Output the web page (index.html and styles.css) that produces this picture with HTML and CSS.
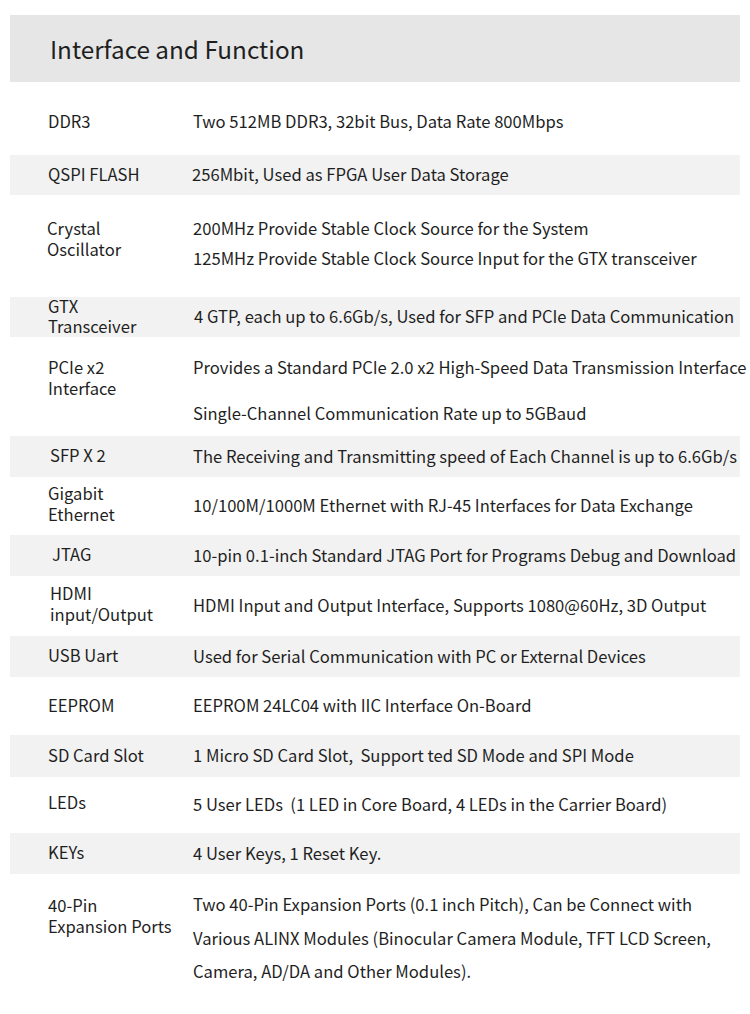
FILE: index.html
```html
<!DOCTYPE html>
<html>
<head>
<meta charset="utf-8">
<link rel="stylesheet" href="styles.css">
</head>
<body>
<div class="sheet">
  <div class="head"><h1 class="title">Interface and Function</h1></div>

  <div class="row h-ddr pad-ddr"><div class="label">DDR3</div><div class="desc">Two 512MB DDR3, 32bit Bus, Data Rate 800Mbps</div></div>
  <div class="row gray h40"><div class="label">QSPI FLASH</div><div class="desc shift-l">256Mbit, Used as FPGA User Data Storage</div></div>
  <div class="row h-crystal top pad-crystal"><div class="label shift-l">Crystal<br>Oscillator</div><div class="desc multi up5"><p>200MHz Provide Stable Clock Source for the System</p><p>125MHz Provide Stable Clock Source Input for the GTX transceiver</p></div></div>
  <div class="row gray h40"><div class="label">GTX<br>Transceiver</div><div class="desc shift-r">4 GTP, each up to 6.6Gb/s, Used for SFP and PCIe Data Communication</div></div>
  <div class="row h-pcie top pad-pcie"><div class="label">PCIe x2<br>Interface</div><div class="desc multi up5 gap16"><p>Provides a Standard PCIe 2.0 x2 High-Speed Data Transmission Interface</p><p>Single-Channel Communication Rate up to 5GBaud</p></div></div>
  <div class="row gray h41"><div class="label shift-r2">SFP X 2</div><div class="desc">The Receiving and Transmitting speed of Each Channel is up to 6.6Gb/s</div></div>
  <div class="row h58 lift"><div class="label">Gigabit<br>Ethernet</div><div class="desc">10/100M/1000M Ethernet with RJ-45 Interfaces for Data Exchange</div></div>
  <div class="row gray h41"><div class="label shift-r4">JTAG</div><div class="desc">10-pin 0.1-inch Standard JTAG Port for Programs Debug and Download</div></div>
  <div class="row h60 lift"><div class="label shift-r2">HDMI<br>input/Output</div><div class="desc">HDMI Input and Output Interface, Supports 1080@60Hz, 3D Output</div></div>
  <div class="row gray h41"><div class="label">USB Uart</div><div class="desc">Used for Serial Communication with PC or External Devices</div></div>
  <div class="row h58"><div class="label">EEPROM</div><div class="desc">EEPROM 24LC04 with IIC Interface On-Board</div></div>
  <div class="row gray h42"><div class="label">SD Card Slot</div><div class="desc">1 Micro SD Card Slot,&nbsp; Support ted SD Mode and SPI Mode</div></div>
  <div class="row h56 lift"><div class="label">LEDs</div><div class="desc">5 User LEDs &nbsp;(1 LED in Core Board, 4 LEDs in the Carrier Board)</div></div>
  <div class="row gray h41"><div class="label">KEYs</div><div class="desc">4 User Keys, 1 Reset Key.</div></div>
  <div class="row h-pin top pad-pin"><div class="label">40-Pin<br>Expansion Ports</div><div class="desc multi-wide up7"><p>Two 40-Pin Expansion Ports (0.1 inch Pitch), Can be Connect with</p><p>Various ALINX Modules (Binocular Camera Module, TFT LCD Screen,</p><p>Camera, AD/DA and Other Modules).</p></div></div>
</div>
</body>
</html>
```

FILE: styles.css
```css
html, body {
  margin: 0;
  padding: 0;
  background: #ffffff;
}
body {
  width: 750px;
  height: 1014px;
  overflow: hidden;
  font-family: "Noto Sans CJK SC", "Noto Sans", sans-serif;
  font-weight: 400;
  color: #1f1f1f;
}
.sheet {
  margin: 15px 10px 0 10px;
  width: 730px;
}
.head {
  height: 67px;
  background: #e6e6e6;
  display: flex;
  align-items: center;
  padding-left: 40px;
}
.title {
  margin: 0;
  font-size: 24.3px;
  font-weight: 400;
  line-height: 30px;
  color: #1f1f1f;
}
.row {
  display: flex;
  align-items: center;
  box-sizing: border-box;
  font-size: 16.6px;
  white-space: nowrap;
  padding-bottom: 2px;
}
.row.top { align-items: flex-start; padding-bottom: 0; }
.row.lift { padding-bottom: 5px; }
.row.lift .desc { margin-top: 3px; }
.gray { background: #f2f2f2; }
.label {
  width: 145px;
  padding-left: 38px;
  line-height: 20.5px;
  flex: none;
}
.desc {
  line-height: 24px;
}
.desc p { margin: 0; }
.multi { line-height: 30px; }
.multi-wide { line-height: 33.5px; }
.gap16 p + p { margin-top: 16px; }
.up5 { margin-top: -5px; }
.up7 { margin-top: -7px; }
.shift-l { margin-left: -1px; }
.shift-r { margin-left: 1px; }
.label.shift-l { padding-left: 37px; width: 146px; margin-left: 0; }
.shift-r2 { padding-left: 40px; width: 143px; }
.shift-r4 { padding-left: 42px; width: 141px; }

.h-ddr { height: 73px; }
.pad-ddr { padding-top: 7px; }
.h40 { height: 40px; }
.h41 { height: 41px; }
.h42 { height: 42px; }
.h56 { height: 56px; }
.h58 { height: 58px; }
.h60 { height: 60px; }
.h-crystal { height: 102px; }
.pad-crystal { padding-top: 23px; }
.h-pcie { height: 99px; }
.pad-pcie { padding-top: 20px; }
.h-pin { height: 140px; }
.pad-pin { padding-top: 21px; }
```
